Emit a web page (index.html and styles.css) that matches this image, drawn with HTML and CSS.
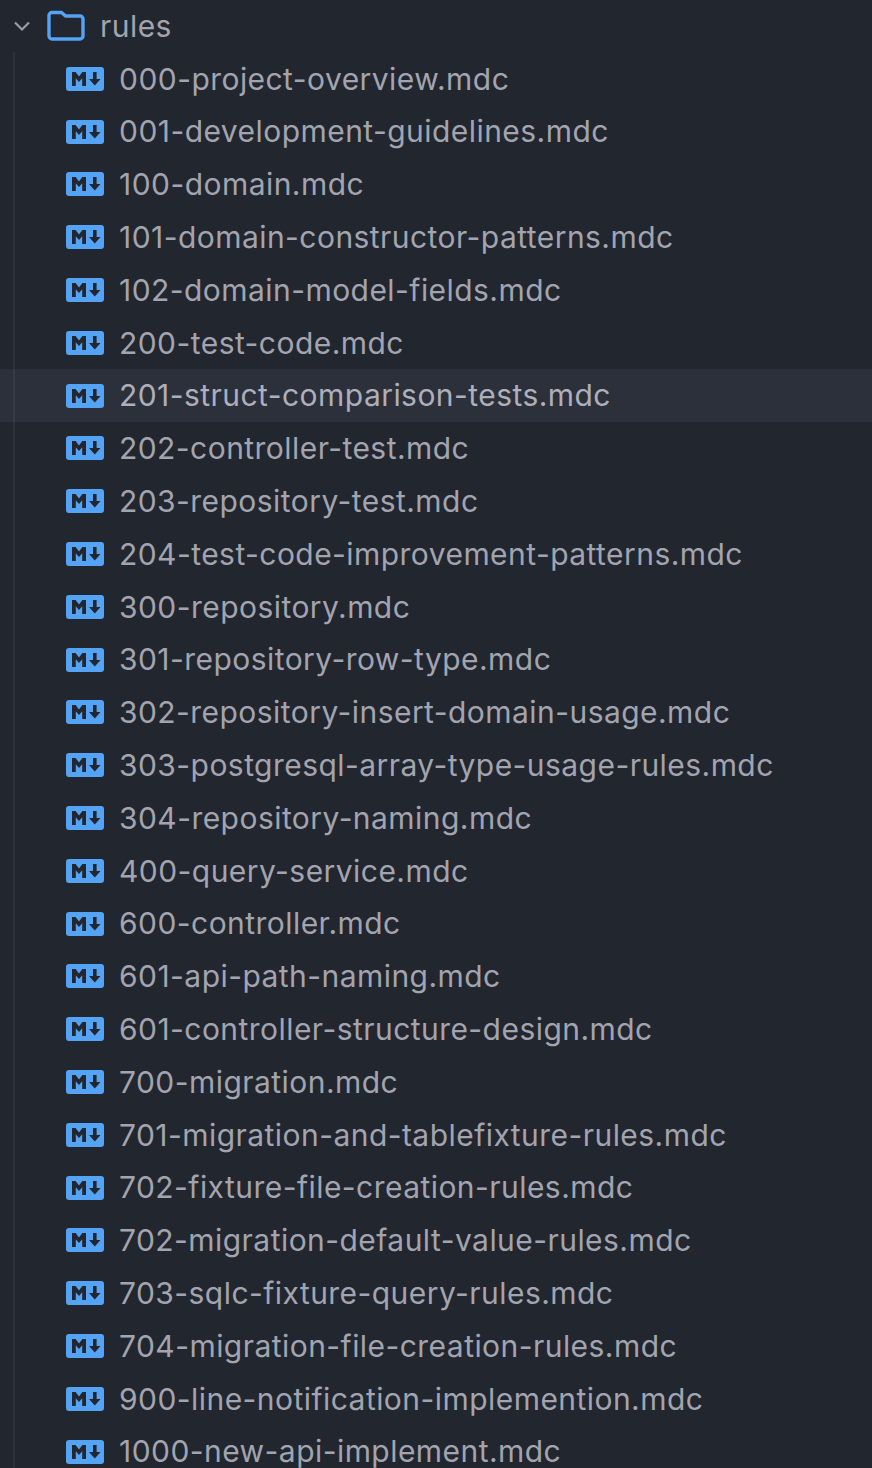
FILE: index.html
```html
<!DOCTYPE html>
<html lang="en">
<head>
<meta charset="utf-8">
<title>rules</title>
<link rel="stylesheet" href="styles.css">
</head>
<body>
<svg class="defs" width="0" height="0" aria-hidden="true">
  <symbol id="md" viewBox="0 0 38 24">
    <rect width="38" height="24" rx="3" fill="#54a3f5"/>
    <path d="M6 19V5h3.6L13 9.400 16.400 5H20v14h-3.800v-7.800L13 15l-3.200-3.800V19z" fill="#22262f"/>
    <path d="M27 5h3.600v7h3.900L28.800 18.500 23 12h4z" fill="#22262f"/>
  </symbol>
</svg>
<main class="tree">
  <div class="row root">
    <svg class="chevron" viewBox="0 0 18 12"><path d="M2 2.500l7 7 7-7" fill="none" stroke="#9a9ca6" stroke-width="2.200"/></svg>
    <svg class="folder" viewBox="0 0 38 31"><path d="M2 5.500a3 3 0 0 1 3-3h9.500l4 3.500H33a3 3 0 0 1 3 3v17a3 3 0 0 1-3 3H5a3 3 0 0 1-3-3z" fill="none" stroke="#54a3f5" stroke-width="3.400" stroke-linejoin="round"/></svg>
    <span class="name">rules</span>
  </div>
  <div class="children">
    <div class="row file"><svg class="md"><use href="#md"/></svg><span class="name">000-project-overview.mdc</span></div>
    <div class="row file"><svg class="md"><use href="#md"/></svg><span class="name">001-development-guidelines.mdc</span></div>
    <div class="row file"><svg class="md"><use href="#md"/></svg><span class="name">100-domain.mdc</span></div>
    <div class="row file"><svg class="md"><use href="#md"/></svg><span class="name">101-domain-constructor-patterns.mdc</span></div>
    <div class="row file"><svg class="md"><use href="#md"/></svg><span class="name">102-domain-model-fields.mdc</span></div>
    <div class="row file"><svg class="md"><use href="#md"/></svg><span class="name">200-test-code.mdc</span></div>
    <div class="row file hover"><svg class="md"><use href="#md"/></svg><span class="name">201-struct-comparison-tests.mdc</span></div>
    <div class="row file"><svg class="md"><use href="#md"/></svg><span class="name">202-controller-test.mdc</span></div>
    <div class="row file"><svg class="md"><use href="#md"/></svg><span class="name">203-repository-test.mdc</span></div>
    <div class="row file"><svg class="md"><use href="#md"/></svg><span class="name">204-test-code-improvement-patterns.mdc</span></div>
    <div class="row file"><svg class="md"><use href="#md"/></svg><span class="name">300-repository.mdc</span></div>
    <div class="row file"><svg class="md"><use href="#md"/></svg><span class="name">301-repository-row-type.mdc</span></div>
    <div class="row file"><svg class="md"><use href="#md"/></svg><span class="name">302-repository-insert-domain-usage.mdc</span></div>
    <div class="row file"><svg class="md"><use href="#md"/></svg><span class="name">303-postgresql-array-type-usage-rules.mdc</span></div>
    <div class="row file"><svg class="md"><use href="#md"/></svg><span class="name">304-repository-naming.mdc</span></div>
    <div class="row file"><svg class="md"><use href="#md"/></svg><span class="name">400-query-service.mdc</span></div>
    <div class="row file"><svg class="md"><use href="#md"/></svg><span class="name">600-controller.mdc</span></div>
    <div class="row file"><svg class="md"><use href="#md"/></svg><span class="name">601-api-path-naming.mdc</span></div>
    <div class="row file"><svg class="md"><use href="#md"/></svg><span class="name">601-controller-structure-design.mdc</span></div>
    <div class="row file"><svg class="md"><use href="#md"/></svg><span class="name">700-migration.mdc</span></div>
    <div class="row file"><svg class="md"><use href="#md"/></svg><span class="name">701-migration-and-tablefixture-rules.mdc</span></div>
    <div class="row file"><svg class="md"><use href="#md"/></svg><span class="name">702-fixture-file-creation-rules.mdc</span></div>
    <div class="row file"><svg class="md"><use href="#md"/></svg><span class="name">702-migration-default-value-rules.mdc</span></div>
    <div class="row file"><svg class="md"><use href="#md"/></svg><span class="name">703-sqlc-fixture-query-rules.mdc</span></div>
    <div class="row file"><svg class="md"><use href="#md"/></svg><span class="name">704-migration-file-creation-rules.mdc</span></div>
    <div class="row file"><svg class="md"><use href="#md"/></svg><span class="name">900-line-notification-implemention.mdc</span></div>
    <div class="row file"><svg class="md"><use href="#md"/></svg><span class="name">1000-new-api-implement.mdc</span></div>
  </div>
</main>
</body>
</html>
```
FILE: styles.css
```css
html, body {
  margin: 0;
  height: 100%;
  overflow: hidden;
  background: #22262f;
}
.defs { position: absolute; }
.tree {
  margin-top: -0.6px;
  font-family: Inter, "Liberation Sans", sans-serif;
  font-size: 30px;
  letter-spacing: 0.45px;
  color: #a2a4af;
}
.row {
  display: flex;
  align-items: center;
  height: 52.8px;
  white-space: nowrap;
}
.root { padding-left: 13px; }
.chevron { width: 18px; height: 12px; flex: none; margin-right: 16px; }
.folder { width: 38px; height: 31px; flex: none; margin-right: 15px; }
.children { position: relative; }
.children::before {
  content: "";
  position: absolute;
  left: 13px;
  top: 0;
  bottom: 0;
  width: 2px;
  background: rgba(255, 255, 255, 0.055);
}
.file { padding-left: 66px; }
.md { width: 38px; height: 24px; flex: none; margin: 0.4px 15px 0 0; }
.hover { background: #2c303a; color: #adafba; }
```
